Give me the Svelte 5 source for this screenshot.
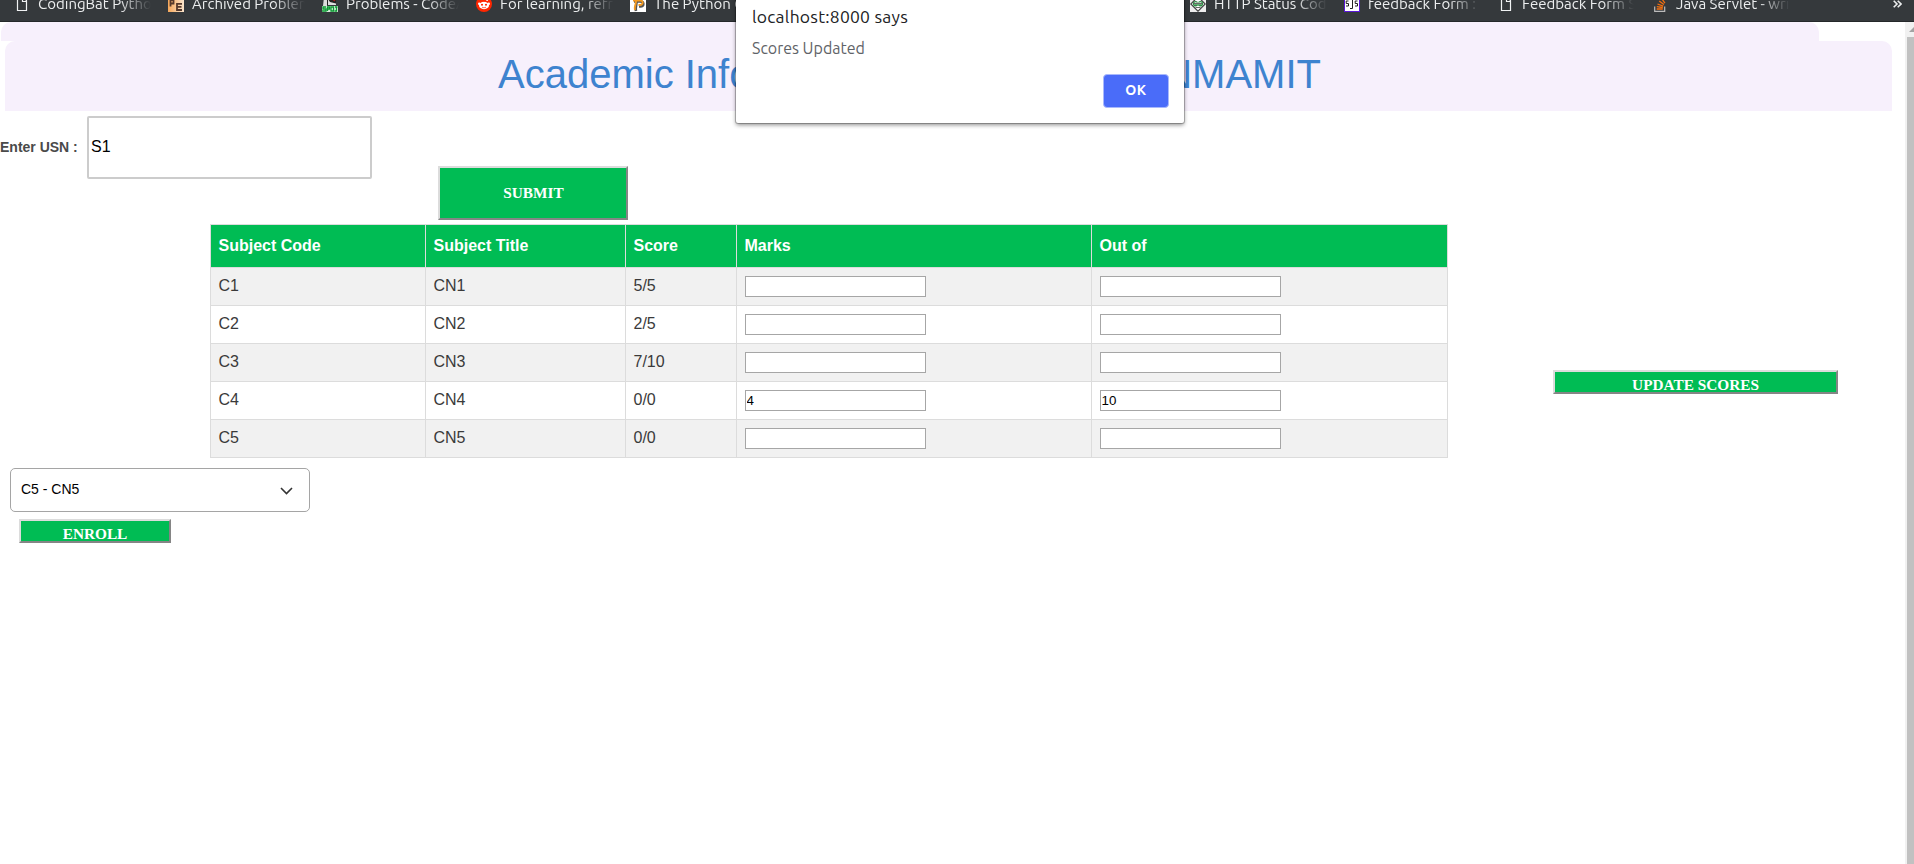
<script>
  const left = [
    ['page', 'CodingBat Pytho', 113],
    ['pe', 'Archived Problem', 113],
    ['spoj', 'Problems - CodeA', 113],
    ['reddit', 'For learning, refre', 114],
    ['python', 'The Python Code', 114]
  ];
  const right = [
    ['geek', 'HTTP Status Code', 113],
    ['sjs', 'feedback Form : S', 112],
    ['page', 'Feedback Form S', 112],
    ['stack', 'Java Servlet - writ', 114]
  ];
  let usn = $state('S1');
  let rows = $state([
    { code: 'C1', title: 'CN1', score: '5/5', marks: '', out: '' },
    { code: 'C2', title: 'CN2', score: '2/5', marks: '', out: '' },
    { code: 'C3', title: 'CN3', score: '7/10', marks: '', out: '' },
    { code: 'C4', title: 'CN4', score: '0/0', marks: '4', out: '10' },
    { code: 'C5', title: 'CN5', score: '0/0', marks: '', out: '' }
  ]);
</script>

{#snippet icon(name)}
  <svg class="ico" viewBox="0 0 16 16" width="16" height="16">
    {#if name === 'page'}
      <path d="M3.500 1.500h6l3 3v10h-9zM8.500 1.500v4h4" fill="none" stroke="#f1f3f4" stroke-width="1.200" />
    {:else if name === 'pe'}
      <defs><linearGradient id="peg"><stop offset="0" stop-color="#f5a75a" /><stop offset="1" stop-color="#fbe5cc" /></linearGradient></defs>
      <rect width="16" height="16" fill="url(#peg)" />
      <path d="M2.500 10.500V4H5.500v3.500H2.500" fill="none" stroke="#54392c" stroke-width="1.800" />
      <path d="M14 7.800H9V14h5M9 10.900h4.500" fill="none" stroke="#54392c" stroke-width="1.800" />
    {:else if name === 'spoj'}
      <path d="M3 0h11v9H2z" fill="#222" />
      <path d="M2 1h3v9H1zM6 3l2 3 6 1.500V9H6z" fill="#ddd" />
      <path d="M11 3.500l2 1.500" stroke="#a32020" stroke-width="1.500" />
      <rect y="10" width="16" height="6" fill="#d7eedb" />
      <path d="M4 11H1v2h3v2H0M5.500 15v-4h2v2h-2M9 11h2.500v4H9zM13 11h2.500M14.500 11v4H12.500" fill="none" stroke="#0b9a32" stroke-width="1.300" />
    {:else if name === 'reddit'}
      <circle cx="8" cy="8" r="8" fill="#ff2600" />
      <ellipse cx="8" cy="9.500" rx="5" ry="3.700" fill="#fff" />
      <circle cx="3.300" cy="7.800" r="1.300" fill="#fff" /><circle cx="12.700" cy="7.800" r="1.300" fill="#fff" />
      <circle cx="11" cy="4" r="1.100" fill="#fff" />
      <circle cx="6" cy="8.800" r="1.050" fill="#ff2600" /><circle cx="10" cy="8.800" r="1.050" fill="#ff2600" />
      <path d="M8 6l.6-2.500 2 .5M6 11.200q2 1.300 4 0" fill="none" stroke="#ff2600" stroke-width=".7" />
    {:else if name === 'python'}
      <rect width="16" height="16" fill="#fff" />
      <path d="M6 15c-1-4 1-6 .5-11M4 5.500h6.500c4 0 3.500 5 0 5H9" fill="none" stroke="#555" stroke-width="2.600" />
      <path d="M5 14c-1-4 1.500-6 1-10M3 4.500h7c4 0 3 4.500 0 4.500H8.500" fill="none" stroke="#f39a20" stroke-width="1.900" />
    {:else if name === 'geek'}
      <rect width="16" height="16" fill="#eee" />
      <path d="M8 .8L15.200 8 8 15.200.8 8z" fill="#fff" stroke="#444" stroke-width="1.200" />
      <path d="M7.500 6.500A2.200 2.200 0 1 0 7.500 9H4.500M8.500 6.500A2.200 2.200 0 1 1 8.500 9H11.500" fill="none" stroke="#2f8d46" stroke-width="1.300" />
      <path d="M4 7.500h8M5.500 11.500h5" stroke="#444" stroke-width=".8" />
    {:else if name === 'sjs'}
      <rect x=".5" y=".5" width="15" height="15" fill="#fff" stroke="#5a17d6" />
      <path d="M4.500 5H2.200v2.500H4.500V10H2M8.500 4v8.500H6M13.500 5h-2.300v2.500h2.300V10h-2.500" fill="none" stroke="#222" stroke-width="1" />
    {:else}
      <path d="M2.700 10.500v4.800h10v-4.800" fill="none" stroke="#bcbbbb" stroke-width="1.200" />
      <path d="M4.700 13h6M4.800 10.700l6 .8M5.500 8l5.700 2.100M7.200 5l4.700 3.600M9.700 2.500l3.200 4.700" stroke="#f26f10" stroke-width="1.300" />
    {/if}
  </svg>
{/snippet}

{#snippet bookmarks(items)}
  {#each items as [name, text, width]}
    <div class="bm">{@render icon(name)}<span style="width:{width}px">{text}</span></div>
  {/each}
{/snippet}

<div class="window">
  <div class="bar">
    <div class="group">{@render bookmarks(left)}</div>
    <div class="group end">{@render bookmarks(right)}</div>
    <svg class="more" width="9" height="8" viewBox="0 0 9 8"><path d="M.7.8L4 4 .7 7.200M4.700.8L8 4 4.700 7.200" fill="none" stroke="#eceeef" stroke-width="1.600" /></svg>
  </div>

  <div class="view">
    <main>
      <div class="strip"></div>
      <header><h1><span>Academic Information</span><span>NMAMIT</span></h1></header>
      <form class="usn" onsubmit={(e) => e.preventDefault()}>
        <label for="usn">Enter USN :</label>
        <input id="usn" bind:value={usn} />
        <button class="submit">SUBMIT</button>
      </form>
      <div class="scores">
        <table>
          <colgroup><col style="width:215px" /><col style="width:200px" /><col style="width:111px" /><col style="width:355px" /><col style="width:356px" /></colgroup>
          <thead><tr><th>Subject Code</th><th>Subject Title</th><th>Score</th><th>Marks</th><th>Out of</th></tr></thead>
          <tbody>
            {#each rows as r}
              <tr>
                <td>{r.code}</td><td>{r.title}</td><td>{r.score}</td>
                <td><input bind:value={r.marks} aria-label="Marks" /></td>
                <td><input bind:value={r.out} aria-label="Out of" /></td>
              </tr>
            {/each}
          </tbody>
        </table>
        <button class="update">UPDATE SCORES</button>
      </div>
      <div class="select">
        <span>C5 - CN5</span>
        <svg width="13" height="8" viewBox="0 0 13 8"><path d="M1 1l5.500 5.500L12 1" fill="none" stroke="#333" stroke-width="1.600" /></svg>
      </div>
      <button class="enroll">ENROLL</button>
    </main>
    <div class="scroll">
      <svg width="9" height="15" viewBox="0 0 9 15"><path d="M4 10l5-5v5z" fill="#a3a3a3" /></svg>
      <div class="thumb"></div>
    </div>
  </div>

  <div class="dialog" role="alertdialog" aria-label="Scores Updated">
    <div class="host">localhost:8000 says</div>
    <div class="msg">Scores Updated</div>
    <button class="ok">OK</button>
  </div>
</div>

<style>
  .window, .window :global(*) { box-sizing: border-box; }
  .window {
    position: relative; width: 1914px; height: 864px; overflow: hidden;
    display: flex; flex-direction: column; background: #fff;
    font-family: "Liberation Sans", Arial, sans-serif;
  }
  .bar {
    height: 22px; flex: none; display: flex; background: #35393c; overflow: hidden;
    border-bottom: 1px solid #25282a; padding-left: 14px;
    font-family: Ubuntu, "Noto Sans", sans-serif;
  }
  .group { display: flex; width: 1176px; flex: none; }
  .group.end { width: 703px; }
  .bm { width: 154px; height: 16px; margin-top: -4px; display: flex; gap: 8px; align-items: center; flex: none; }
  .bm span {
    color: #eceeef; font-size: 15px; line-height: 20px; white-space: nowrap; overflow: hidden;
    -webkit-mask-image: linear-gradient(to right, #000 72%, transparent 100%);
    mask-image: linear-gradient(to right, #000 72%, transparent 100%);
  }
  .ico { display: block; flex: none; }
  .view { display: flex; flex: 1; min-height: 0; }
  main { width: 1905px; display: flex; flex-direction: column; align-items: flex-start; }
  .strip { width: 1818px; height: 19px; margin-left: 1px; background: #f7f0fc; border-radius: 10px 10px 0 0; }
  header {
    width: 1887px; height: 70px; margin-left: 5px; background: #f7f0fc; border-radius: 10px 10px 0 0;
    display: flex; padding-left: 493px;
  }
  h1 {
    width: 823px; margin: 10px 0 0; font-size: 40px; line-height: 46px; font-weight: 400; color: #3e83cf;
    display: flex; justify-content: space-between; white-space: nowrap;
  }
  .usn { display: flex; align-items: flex-start; height: 113px; }
  label { width: 87px; margin-top: 28px; font-size: 14px; line-height: 16px; font-weight: 700; color: #4a4a4a; white-space: nowrap; }
  #usn {
    width: 285px; height: 63px; margin-top: 5px; border: 2px solid #ccc; border-radius: 2px;
    padding: 0 2px 2px; font: 16px "Liberation Sans", Arial, sans-serif; color: #000; background: #fff;
  }
  button {
    background: #00bc54; color: #fff; border: 2px solid; border-color: #dcdcdc #858585 #858585 #dcdcdc;
    font: 700 15.300px/17px "Liberation Serif", "Times New Roman", serif; padding: 0; text-align: center;
  }
  .submit { width: 190px; height: 54px; margin: 55px 0 0 66px; padding: 0 0 2px 1px; }
  .scores { display: flex; align-items: flex-start; padding-left: 210px; }
  table { width: 1238px; flex: none; border-collapse: collapse; table-layout: fixed; font-size: 16px; color: #3a3a3a; }
  th, td { border: 1px solid #dcdcdc; text-align: left; padding: 0 8px 0 7.500px; }
  th { height: 43px; background: #00bc54; color: #fff; font-weight: 700; line-height: 18px; }
  td { height: 38px; line-height: 18px; padding-bottom: 2px; }
  tbody tr:nth-child(odd) { background: #f1f1f1; }
  td input {
    display: block; width: 181px; height: 21px; margin-top: 1px; border: 1px solid #a6a6a6; padding: 0 1px;
    font: 13.333px "Liberation Sans", Arial, sans-serif; color: #000; background: #fff;
  }
  .update { width: 285px; height: 24px; margin: 146px 0 0 105px; padding-top: 5px; line-height: 15px; }
  .select {
    width: 300px; height: 44px; margin: 10px 0 0 10px; border: 1px solid #a5a5a5; border-radius: 5px;
    display: flex; align-items: center; justify-content: space-between; padding: 0 16px 0 10px;
    font-size: 14px; line-height: 16px; color: #000;
  }
  .select span { margin-top: -2px; }
  .select svg { margin-top: 1px; }
  .enroll { width: 152px; height: 24px; margin: 7px 0 0 19px; padding-top: 5px; line-height: 15px; }
  .scroll { width: 9px; background: #f1f1f1; display: flex; flex-direction: column; }
  .scroll svg { display: block; flex: none; }
  .thumb { flex: 1; margin-left: 2px; background: #c1c1c1; }
  .dialog {
    position: absolute; left: 736px; top: -10px; width: 448px; height: 133px; background: #fff;
    border-radius: 2px; box-shadow: 0 0 0 1px rgba(0,0,0,.22), 0 2px 4px rgba(0,0,0,.45);
    display: flex; flex-direction: column; padding: 16px 15px 16px 16px;
    font-family: Ubuntu, "Noto Sans", sans-serif;
  }
  .host { font-size: 17.500px; line-height: 22px; color: #202124; letter-spacing: .230px; white-space: nowrap; }
  .msg { margin-top: 9px; font-size: 16px; line-height: 22px; color: #5f6368; white-space: nowrap; }
  .ok {
    align-self: flex-end; margin-top: 15px; width: 66px; height: 34px; flex: none; background: #4a6cf9;
    border: 1px solid #a9b9fc; border-radius: 4px; padding-bottom: 2px;
    font: 600 14px/20px Ubuntu, "Noto Sans", sans-serif; letter-spacing: .5px;
  }
</style>
